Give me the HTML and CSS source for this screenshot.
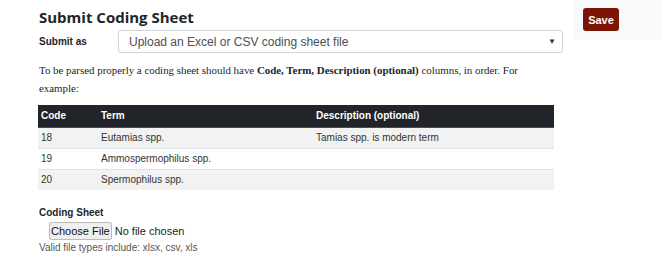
FILE: index.html
```html
<!DOCTYPE html>
<html lang="en">
<head>
  <meta charset="UTF-8" />
  <title>Submit Coding Sheet</title>
  <link rel="stylesheet" href="styles.css">
</head>
<body>
  <div class="page">
    <div class="main">
      <h2>Submit Coding Sheet</h2>

      <div class="form-row">
        <label for="submitAs">Submit as</label>
        <div class="select-box" id="submitAs">
          <span>Upload an Excel or CSV coding sheet file</span>
          <span class="caret">&#9660;</span>
        </div>
      </div>

      <p class="help">
        To be parsed properly a coding sheet should have <b>Code, Term, Description (optional)</b> columns, in order. For example:
      </p>

      <table class="sheet">
        <thead>
          <tr>
            <th class="c-code">Code</th>
            <th class="c-term">Term</th>
            <th>Description (optional)</th>
          </tr>
        </thead>
        <tbody>
          <tr><td>18</td><td>Eutamias spp.</td><td>Tamias spp. is modern term</td></tr>
          <tr><td>19</td><td>Ammospermophilus spp.</td><td></td></tr>
          <tr><td>20</td><td>Spermophilus spp.</td><td></td></tr>
        </tbody>
      </table>

      <div class="upload">
        <div class="upload-label">Coding Sheet</div>
        <input type="file" class="file-input" />
        <div class="hint">Valid file types include: xlsx, csv, xls</div>
      </div>
    </div>

    <div class="side">
      <div class="side-note">Notes</div>
      <button class="save">Save</button>
    </div>
  </div>
</body>
</html>
```

FILE: styles.css
```css
* { margin: 0; padding: 0; box-sizing: border-box; }
body { font-family: 'Liberation Sans', Arial, sans-serif; color: #212529; background: #fff; }

.page {
  display: flex;
  align-items: flex-start;
}

.main {
  width: 573px;
  padding: 7px 10px 0 39px;
}

h2 {
  font-family: 'Open Sans', sans-serif;
  font-size: 15px;
  font-weight: 700;
  line-height: 20px;
  margin-bottom: 3px;
}

/* submit as */
.form-row {
  display: flex;
  align-items: center;
}

.form-row label {
  width: 79px;
  font-size: 10px;
  font-weight: bold;
}

.select-box {
  width: 445px;
  height: 23px;
  border: 1px solid #ced4da;
  border-radius: 3px;
  display: flex;
  align-items: center;
  justify-content: space-between;
  padding: 0 6px 0 10px;
  font-size: 12px;
  color: #495057;
}

.caret {
  font-size: 8px;
  color: #333;
}

.help {
  font-family: 'Liberation Serif', 'Times New Roman', serif;
  font-size: 10.9px;
  line-height: 18px;
  color: #212529;
  margin-top: 8px;
  padding-right: 10px;
}

/* table */
.sheet {
  width: 516px;
  border-collapse: collapse;
  margin-top: 8px;
  margin-left: -1px;
  font-size: 10px;
}

.sheet th {
  background: #212529;
  color: #fff;
  text-align: left;
  height: 22px;
  padding: 0 3px;
  border-bottom: 1px solid #454d55;
}

.sheet td {
  height: 21px;
  padding: 0 3px;
  color: #333;
  border-top: 1px solid #dee2e6;
}

.sheet tbody tr:nth-child(odd) { background: #f2f2f2; }

.c-code { width: 60px; }
.c-term { width: 215px; }

/* upload */
.upload {
  margin-top: 17px;
}

.upload-label {
  font-size: 10px;
  font-weight: bold;
  margin-bottom: 3px;
}

.file-input {
  font-family: 'Liberation Sans', Arial, sans-serif;
  font-size: 11px;
  margin-left: 10px;
  color: #222;
}

.file-input::file-selector-button {
  font-family: 'Liberation Sans', Arial, sans-serif;
  font-size: 11px;
  height: 18px;
  padding: 0 1px;
  margin-right: 3px;
  border: 1px solid #bbb;
  border-radius: 2px;
  background: #efefef;
  color: #111;
}

.hint {
  font-size: 10px;
  color: #555;
  margin-top: 2px;
}

/* sidebar */
.side {
  width: 89px;
  background: #f8f9fa;
  border-bottom-left-radius: 4px;
  padding: 0 0 9px 10px;
}

.side-note {
  color: #8b1a0b;
  font-size: 11px;
  line-height: 11px;
  height: 11px;
  margin-top: -9px;
  margin-left: 8px;
  margin-bottom: 6px;
}

.save {
  background: #7b1505;
  color: #fff;
  border: none;
  border-radius: 3px;
  font-family: 'Liberation Sans', Arial, sans-serif;
  font-weight: bold;
  font-size: 11px;
  width: 36px;
  height: 23px;
}
```
